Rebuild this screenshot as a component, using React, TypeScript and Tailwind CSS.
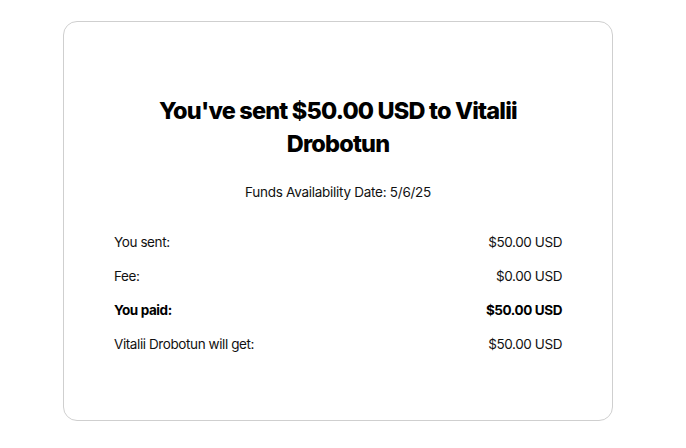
const rows = [
  { label: "You sent:", value: "$50.00 USD", bold: false },
  { label: "Fee:", value: "$0.00 USD", bold: false },
  { label: "You paid:", value: "$50.00 USD", bold: true },
  { label: "Vitalii Drobotun will get:", value: "$50.00 USD", bold: false },
];

const App = () => {
  return (
    <div className="w-[686px] h-[448px] bg-white font-['Inter',sans-serif] text-[#111]">
      <div className="ml-[63px] mt-[21px] w-[550px] h-[400px] rounded-[14px] border border-[#cfcfcf] px-[50px] pt-[72px]">
        <h1 className="text-center text-[23.5px] leading-[33px] font-extrabold tracking-[-0.035em] text-black px-[30px]">
          You've sent $50.00 USD to Vitalii Drobotun
        </h1>
        <div className="mt-[22px] text-center text-[13.5px] leading-[20px] tracking-[-0.02em]">
          Funds Availability Date: 5/6/25
        </div>
        <div className="mt-[23px] flex flex-col">
          {rows.map((r) => (
            <div
              key={r.label}
              className={
                "flex justify-between items-center h-[34px] text-[13.5px] tracking-[-0.03em] " +
                (r.bold ? "font-bold text-black" : "font-normal")
              }
            >
              <span>{r.label}</span>
              <span>{r.value}</span>
            </div>
          ))}
        </div>
      </div>
    </div>
  );
};

export default App;
